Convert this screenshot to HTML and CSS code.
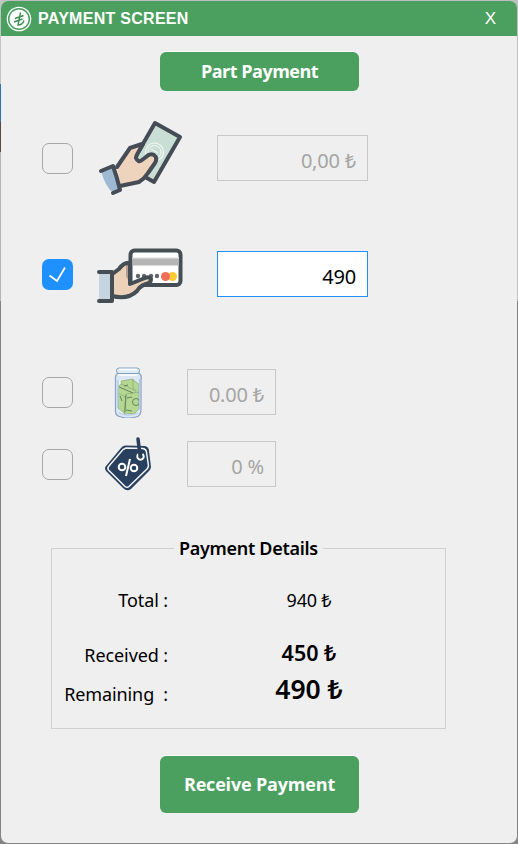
FILE: index.html
```html
<!DOCTYPE html>
<html lang="en">
<head>
<meta charset="utf-8">
<title>Payment Screen</title>
<link rel="stylesheet" href="styles.css">
</head>
<body>
<main class="window">
  <header class="titlebar">
    <svg class="logo" width="26" height="26" viewBox="0 0 26 26">
      <circle cx="13" cy="13" r="12.3" fill="#fff"/>
      <circle cx="13" cy="13" r="10.3" fill="none" stroke="#4ba060" stroke-width="1.5"/>
      <path d="M14.500 6.500L12 19q4.500 0 6-4.500M9 12.500l8.500-3M8 16l8.500-3" fill="none" stroke="#3b8f52" stroke-width="1.400"/>
    </svg>
    <h1 class="title">PAYMENT SCREEN</h1>
    <button class="close">X</button>
  </header>

  <button class="button part"><span>Part Payment</span></button>

  <section class="methods">
    <div class="row cash">
      <span class="check"></span>
      <svg class="icon" width="86" height="78" viewBox="97 119 86 78">
        <path d="M155 123L180 137 154 182 129 168z" fill="#c9ded4" stroke="#454c56" stroke-width="4" stroke-linejoin="round"/>
        <g fill="none" stroke="#f4faf7"><circle cx="154.500" cy="152" r="9" stroke-width="1.200"/><circle cx="154.500" cy="152" r="6.500"/><path d="M151 149l7 4M151 152l6 3" /></g>
        <path d="M142 144L130 148 117 167 120 187 139 182Q144 179 148 173L155 163Q158 158 154 155Q150 153 146 157L142 160Q138 163 136 158Q136 156 139 151z" fill="#efd4bd"/>
        <path d="M142 144L130 148 117 167M120 186L139 182Q144 179 148 173L155 163Q158 158 154 155Q150 153 146 157L142 160Q138 163 136 158Q136 156 139 151L143 144" fill="none" stroke="#454c56" stroke-width="4" stroke-linecap="round" stroke-linejoin="round"/>
        <path d="M101 171L113 166 120 190 113 193Q105 186 101 171z" fill="#9eb9d4"/>
        <path d="M101 171L113 166Q117 177 120 190L113 193" fill="none" stroke="#454c56" stroke-width="4" stroke-linecap="round" stroke-linejoin="round"/>
      </svg>
      <div class="field">0,00 ₺</div>
    </div>

    <div class="row card">
      <span class="check checked">
        <svg width="31" height="31" viewBox="0 0 31 31"><path d="M7.500 16.500l7.500 5.500 8-13.500" fill="none" stroke="#fff" stroke-width="1.800"/></svg>
      </span>
      <svg class="icon" width="86" height="56" viewBox="97 248 86 56">
        <path d="M130 262Q124 261 119 269L111 275V295Q124 300 134 294L139 289 150 281Q152 277 147 276L130 285z" fill="#edd2ba"/>
        <path d="M126 265L130 263V284L126 276z" fill="#b39f92"/>
        <rect x="130.500" y="250.500" width="50" height="34.500" rx="4" fill="#fff" stroke="#454e55" stroke-width="4"/>
        <path d="M132.500 258H179" stroke="#ececec" stroke-width="2"/>
        <path d="M132.500 262H179" stroke="#b5b5b5" stroke-width="7"/>
        <g fill="#62656b"><circle cx="138" cy="276" r="2.200"/><circle cx="144" cy="276" r="2.200"/><circle cx="151" cy="276" r="2.200"/><circle cx="157" cy="276" r="2.200"/></g>
        <circle cx="172.500" cy="276.500" r="4.500" fill="#ffcb35"/><circle cx="165.500" cy="276.500" r="4.500" fill="#ee705c"/>
        <path d="M129 284L145 278Q149 276 151 280Q151 283 146 284Q140 286 137 292Q127 300 112 296L114 282z" fill="#edd2ba"/>
        <path d="M130 263Q124 262 119 269L111 275M130 284V264M130 284L145 278Q149 276 151 279Q151 283 146 284Q140 286 137 291Q128 300 112 296" fill="none" stroke="#454e55" stroke-width="4" stroke-linecap="round" stroke-linejoin="round"/>
        <path d="M99 272H112V301H99z" fill="#c6d4df"/>
        <path d="M99 272H112V301H99" fill="none" stroke="#454e55" stroke-width="4" stroke-linecap="round" stroke-linejoin="round"/>
      </svg>
      <div class="field active">490</div>
    </div>

    <div class="row tip">
      <span class="check"></span>
      <svg class="icon" width="86" height="52" viewBox="97 366 86 52">
        <path d="M118 373Q115 375 115.500 379V410Q115 416 121 417Q128 419 136 417Q141 416 141 410V380Q142 375 139 373z" fill="#dbe7f3" stroke="#86a3c8" stroke-width="1.200"/>
        <path d="M119 380V408Q119 415 128 415Q138 415 139 408V382z" fill="#f0f7ed"/>
        <g fill="#b4d892" stroke="#7d9f70" stroke-width=".6">
          <path d="M121 381l12-2 2 10-13 4z"/>
          <path d="M118 386l4-2 14 7-3 9-15-5z"/>
          <path d="M118 393l9 5-2 16-7-6z"/>
          <path d="M126 394l13-2v17l-5 5-10-1z"/>
          <path d="M133 380l6 4v9l-6-5z"/>
        </g>
        <g fill="none" stroke="#4f6f4e" stroke-width=".8"><circle cx="136" cy="402" r="3.500"/><path d="M127 398l5-1M126 410l6 1M124 386l4-1M120 396l2 5M119 387l14 6M126 395l-1 17"/></g>
        <path d="M118 380V407M139.500 379V409M119 413Q128 417 138 413" fill="none" stroke="#b6cbe6" stroke-width="1.300"/>
        <rect x="116.500" y="368" width="23" height="5.500" rx="2.500" fill="#dfebf3" stroke="#7b99b4" stroke-width=".9"/>
        <path d="M119 369.500h18M118 375h19" stroke="#fff" stroke-width="1.500"/>
      </svg>
      <div class="field small">0.00 ₺</div>
    </div>

    <div class="row discount">
      <span class="check"></span>
      <svg class="icon" width="86" height="54" viewBox="97 437 86 54">
        <path d="M125 445.500L145 446Q149 447 149 451L151 467Q151 469 149 471L131 489Q127 492 123 488L106 471Q104 468 106 466L121 448Q122 446 125 445.500z" fill="#293f5e"/>
        <path d="M126 448L143 448.500Q146 449 146.500 452L148.500 466Q148 468 147 469L129 486.500Q127 488 125 486.500L108.500 470Q107 468 109 466L123 449.500z" fill="none" stroke="#f4f6f8" stroke-width="1.500"/>
        <path d="M138.500 454A3.200 3.200 0 1 0 142.500 454" fill="none" stroke="#fff" stroke-width="2"/>
        <path d="M138 439L140 455" stroke="#293f5e" stroke-width="3.500" stroke-linecap="round"/>
        <g fill="none" stroke="#fff" stroke-width="2"><circle cx="122" cy="467" r="3.300"/><circle cx="134" cy="468" r="3.300"/><path d="M130 459L126 476"/></g>
      </svg>
      <div class="field small">0 %</div>
    </div>
  </section>

  <fieldset class="details">
    <legend>Payment Details</legend>
    <div class="line total"><span class="label">Total :</span><span class="value">940 ₺</span></div>
    <div class="line received"><span class="label">Received :</span><span class="value">450 ₺</span></div>
    <div class="line remaining"><span class="label">Remaining&nbsp; :</span><span class="value">490 ₺</span></div>
  </fieldset>

  <button class="button receive"><span>Receive Payment</span></button>
</main>
</body>
</html>
```

FILE: styles.css
```css
* { box-sizing: border-box; }

body {
  margin: 0;
  height: 844px;
  padding: 1px;
  overflow: hidden;
  font-family: "Noto Sans", "Open Sans", sans-serif;
  background:
    linear-gradient(#c4c4c4 0 84px, #2e75b0 84px 122px, #5c4744 122px 152px, #b5b5b5 152px 301px, #858585 301px) 0 0 / 10px 100% no-repeat,
    linear-gradient(#bdbdbd 0 301px, #858585 301px);
}

.window {
  display: flex;
  flex-direction: column;
  height: 842px;
  overflow: hidden;
  border-radius: 7px;
  background: #efefef;
}

.titlebar {
  display: flex;
  align-items: center;
  height: 35px;
  flex: none;
  padding: 0 19px 0 5px;
  background: #4ba060;
  color: #fff;
}

.logo { flex: none; }

.title {
  flex: 1;
  margin: 0 0 0 6px;
  font: bold 16px/20px "Liberation Sans", Arial, sans-serif;
  letter-spacing: 0.28px;
}

button {
  border: 0;
  padding: 0;
  color: #fff;
  background: #4ba060;
}

.close { width: 15px; font: 17px/20px "Liberation Sans", Arial, sans-serif; }

.button {
  flex: none;
  width: 199px;
  margin-left: 159px;
  border-radius: 6px;
  box-shadow: 0 -1px #fafafa;
  font: bold 18px/24px "Open Sans", "Noto Sans", sans-serif;
}

.part { height: 39px; margin-top: 16px; padding-bottom: 2px; letter-spacing: -0.5px; }
.receive { height: 57px; margin-top: 27px; padding-bottom: 2px; letter-spacing: -0.18px; }

.methods { padding-left: 41px; }

.row { display: flex; align-items: center; height: 46px; }
.cash { margin-top: 44px; }
.card { margin-top: 70px; }
.tip { margin-top: 72px; }
.discount { margin-top: 26px; }

.check {
  flex: none;
  width: 31px;
  height: 31px;
  border: 1px solid #a7a7a7;
  border-radius: 7px;
}

.check.checked { border: 0; background: #1e90ff; }
.check svg { display: block; }

.icon { flex: none; margin-left: 24px; }
.card .icon { margin-top: 3px; }

.field {
  width: 151px;
  height: 46px;
  margin-left: 34px;
  padding: 4px 11px 0 0;
  border: 1px solid #c8c8c8;
  color: #a5a5a5;
  font-size: 20px;
  line-height: 42px;
  letter-spacing: -0.2px;
  text-align: right;
}

.field.active { border-color: #1e90ff; background: #fff; color: #000; }
.field.small { width: 89px; margin-left: 4px; }

.details {
  flex: none;
  width: 395px;
  height: 193px;
  margin: 49px 0 0 50px;
  padding: 0;
  border: 1px solid #d1d1d1;
  color: #000;
}

.details legend {
  height: 25px;
  margin-left: 122px;
  padding: 0 5px;
  font-size: 18px;
  font-weight: 600;
  line-height: 25px;
  letter-spacing: -0.3px;
}

.line { display: grid; grid-template-columns: 116px 1fr; height: 30px; }
.label { text-align: right; font-size: 18px; line-height: 30px; letter-spacing: -0.1px; white-space: nowrap; }
.value { padding-left: 5px; text-align: center; line-height: 30px; }
.total { margin-top: 24px; }
.total .value { font-size: 18px; letter-spacing: -0.2px; }
.received { margin-top: 25px; }
.received .value { font-size: 21.5px; font-weight: 600; line-height: 26px; }
.remaining { margin-top: 9px; }
.remaining .value { font-size: 26.5px; font-weight: 600; line-height: 20px; }
```
